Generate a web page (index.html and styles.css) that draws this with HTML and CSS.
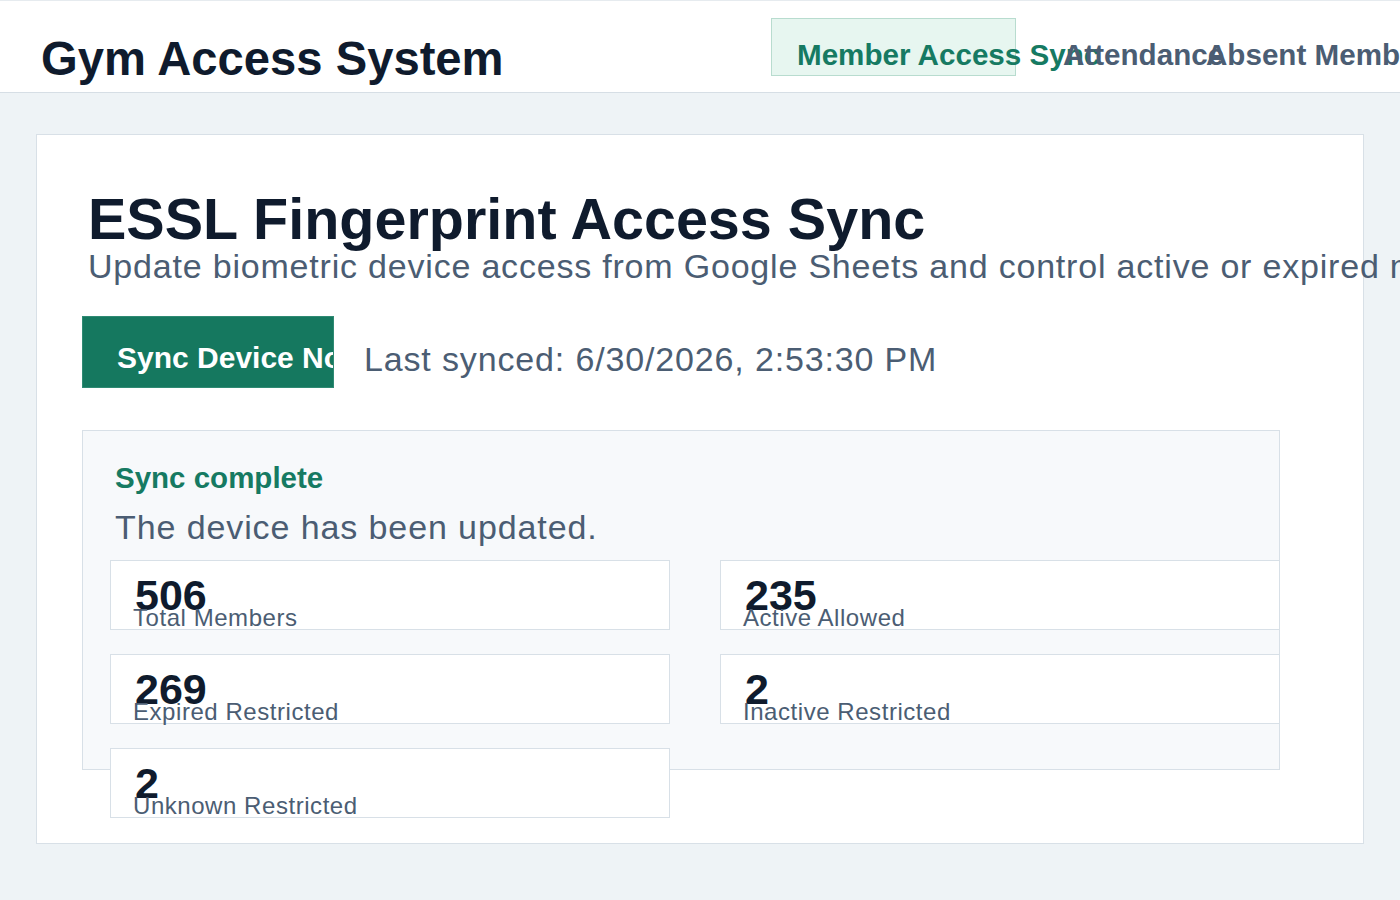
FILE: index.html
```html
<!DOCTYPE html>
<html lang="en">
<head>
<meta charset="utf-8">
<title>Gym Access System</title>
<link rel="stylesheet" href="styles.css">
</head>
<body>
<header class="topbar">
  <div class="brand">Gym Access System</div>
  <nav class="nav">
    <a class="nav-link nav-link--active nav-link--wide">Member Access Sync</a>
    <a class="nav-link">Attendance</a>
    <a class="nav-link">Absent Members</a>
  </nav>
</header>
<main class="page">
  <section class="panel">
    <div class="panel-head">
      <h1 class="panel-title">ESSL Fingerprint Access Sync</h1>
      <p class="panel-sub">Update biometric device access from Google Sheets and control active or expired members.</p>
    </div>
    <div class="sync-row">
      <button class="sync-btn">Sync Device Now</button>
      <span class="sync-time">Last synced: 6/30/2026, 2:53:30 PM</span>
    </div>
    <div class="result">
      <div class="result-head">
        <div class="result-title">Sync complete</div>
        <div class="result-text">The device has been updated.</div>
      </div>
      <div class="stats">
        <div class="stat"><div class="stat-num">506</div><div class="stat-label">Total Members</div></div>
        <div class="stat"><div class="stat-num">235</div><div class="stat-label">Active Allowed</div></div>
        <div class="stat"><div class="stat-num">269</div><div class="stat-label">Expired Restricted</div></div>
        <div class="stat"><div class="stat-num">2</div><div class="stat-label">Inactive Restricted</div></div>
        <div class="stat"><div class="stat-num">2</div><div class="stat-label">Unknown Restricted</div></div>
      </div>
    </div>
  </section>
</main>
</body>
</html>
```

FILE: styles.css
```css
html {
  overflow: hidden;
}

body {
  margin: 0;
  background: #eef3f6;
  font-family: "Liberation Sans", Arial, sans-serif;
  color: #0f1b2d;
}

.topbar {
  box-sizing: border-box;
  height: 93px;
  display: flex;
  align-items: flex-start;
  background: #ffffff;
  border-top: 1px solid #e6ebef;
  border-bottom: 1px solid #d6dee5;
  padding: 0 98px 0 41px;
}

.brand {
  margin-top: 31px;
  font-size: 47.2px;
  line-height: 1.15;
  font-weight: 700;
  color: #0f1b2d;
  white-space: nowrap;
}

.nav {
  margin-left: auto;
  margin-top: 17px;
  display: flex;
  gap: 21px;
}

.nav-link {
  box-sizing: border-box;
  flex: none;
  width: 122px;
  height: 58px;
  padding: 19px 0 0 25px;
  border: 1px solid transparent;
  font-size: 29.6px;
  line-height: 1.15;
  font-weight: 700;
  color: #4b5d73;
  white-space: nowrap;
  text-decoration: none;
}

.nav-link--wide {
  width: 245px;
}

.nav-link--active {
  background: #e7f6f0;
  border-color: #b8dccf;
  color: #167a62;
}

.page {
  padding: 41px 36px;
}

.panel {
  box-sizing: border-box;
  height: 710px;
  background: #ffffff;
  border: 1px solid #d8e0e7;
  padding: 56px 45px 0;
}

.panel-head {
  padding-left: 6px;
}

.panel-title {
  margin: 0;
  font-size: 57.5px;
  line-height: 57px;
  font-weight: 700;
  color: #0f1b2d;
  white-space: nowrap;
}

.panel-sub {
  margin: 0;
  font-size: 34px;
  line-height: 1.1;
  letter-spacing: 0.8px;
  color: #4b5d73;
  white-space: nowrap;
}

.sync-row {
  display: flex;
  align-items: flex-start;
  gap: 30px;
  margin-top: 31px;
}

.sync-btn {
  box-sizing: border-box;
  flex: none;
  width: 252px;
  height: 72px;
  padding: 12px 0 0 34px;
  margin: 0;
  border: 1px solid #2f8a73;
  background: #15785f;
  color: #ffffff;
  font-family: "Liberation Sans", Arial, sans-serif;
  font-size: 30px;
  line-height: 1.15;
  font-weight: 700;
  text-align: left;
  white-space: nowrap;
  overflow: hidden;
}

.sync-time {
  margin-top: 24px;
  font-size: 34px;
  line-height: 1.15;
  letter-spacing: 0.85px;
  color: #4b5d73;
  white-space: nowrap;
}

.result {
  box-sizing: border-box;
  width: 1198px;
  height: 340px;
  margin-top: 42px;
  background: #f7f9fb;
  border: 1px solid #d8e0e7;
  padding: 30px 0 0 27px;
}

.result-head {
  padding-left: 5px;
}

.result-title {
  font-size: 29.5px;
  line-height: 1.15;
  font-weight: 700;
  color: #167a62;
}

.result-text {
  margin-top: 13px;
  font-size: 34px;
  line-height: 1.15;
  letter-spacing: 0.9px;
  color: #4b5d73;
}

.stats {
  display: grid;
  grid-template-columns: 560px 560px;
  column-gap: 50px;
  row-gap: 24px;
  margin-top: 13px;
}

.stat {
  box-sizing: border-box;
  height: 70px;
  background: #ffffff;
  border: 1px solid #d8e0e7;
  padding: 13px 22px 0;
}

.stat-num {
  padding-left: 2px;
  font-size: 43px;
  line-height: 42px;
  font-weight: 700;
  color: #0f1b2d;
}

.stat-label {
  margin-top: -12px;
  font-size: 24px;
  line-height: 1.15;
  letter-spacing: 0.55px;
  color: #4b5d73;
  white-space: nowrap;
}
```
